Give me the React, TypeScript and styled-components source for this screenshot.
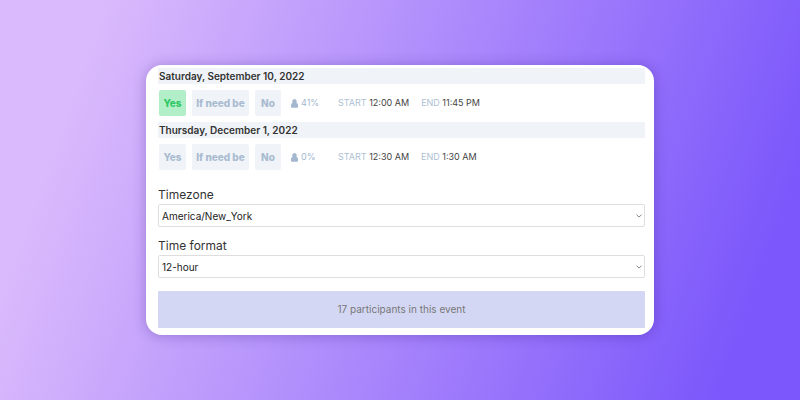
import React from "react";
import styled, { createGlobalStyle } from "styled-components";

const GlobalStyle = createGlobalStyle`
  *, *::before, *::after { box-sizing: border-box; }
  body { margin: 0; font-family: Inter, sans-serif; color: #333; }
`;

const Page = styled.div`
  min-height: 100vh;
  display: flex;
  align-items: center;
  justify-content: center;
  background: linear-gradient(109.6deg, #dabafc 11.2%, #7c57fb 91.1%);
`;

const Card = styled.main`
  width: 100%;
  max-width: 508px;
  padding: 3px 9px 7px 12px;
  border-radius: 16px;
  background: #fff;
  box-shadow: 0 1px 14px rgba(40, 10, 110, 0.28);
`;

const DayHeading = styled.h2`
  margin: 0;
  padding: 0 1px;
  font-size: 10px;
  font-weight: 600;
  line-height: 16px;
  color: #333;
  background: #f0f3f8;
`;

const SlotRow = styled.div`
  display: flex;
  align-items: center;
  padding: 6px 1px;
  font-size: 9px;
  line-height: 16px;
`;

const Votes = styled.div`
  display: grid;
  grid-template-columns: 27px 57px 26px;
  gap: 6px;
`;

const VoteButton = styled.button<{ $active?: boolean }>`
  height: 26px;
  padding: 0;
  border: 0;
  border-radius: 2px;
  font: 800 10px/16px Inter, sans-serif;
  color: ${(p) => (p.$active ? "#2fc765" : "#a9bbd0")};
  background: ${(p) => (p.$active ? "#b2eec8" : "#f0f3f8")};
`;

const Share = styled.div`
  display: flex;
  align-items: center;
  gap: 3px;
  width: 47px;
  margin-left: 10px;
  color: #a3b8cf;
`;

const TimeItem = styled.div`
  margin-right: 12px;
  color: #444;
`;

const TimeLabel = styled.span`
  color: #adbfd3;
`;

const Field = styled.div`
  display: flex;
  flex-direction: column;
  gap: 2px;
  margin-top: 11px;
`;

const FieldLabel = styled.label`
  font-size: 12px;
  line-height: 15px;
`;

const SelectWrap = styled.div`
  display: grid;
  align-items: center;

  & > * {
    grid-area: 1 / 1;
  }
`;

const Select = styled.select`
  appearance: none;
  width: 100%;
  height: 23px;
  padding: 0 12px 0 3px;
  border: 1px solid #dedede;
  border-radius: 2px;
  background: #fff;
  font: 400 10px/16px Inter, sans-serif;
  color: #222;
`;

const Chevron = styled.svg`
  justify-self: end;
  margin-right: 3px;
  pointer-events: none;
`;

const Participants = styled.p`
  margin: 13px 0 0;
  border-radius: 1px;
  background: #d4d7f4;
  color: #777;
  font-size: 10px;
  line-height: 37px;
  text-align: center;
`;

function PersonIcon() {
  return (
    <svg width="7" height="9" viewBox="0 0 14 18" fill="currentColor" aria-hidden="true">
      <ellipse cx="7" cy="5" rx="4.6" ry="5" />
      <path d="M3 8C1 8.800 0 10.300 0 12.500V15.500a2 2 0 0 0 2 2h10a2 2 0 0 0 2-2v-3c0-2.200-1-3.700-3-4.500z" />
    </svg>
  );
}

interface SlotProps {
  day: string;
  share: string;
  start: string;
  end: string;
  chosen?: boolean;
}

function Slot({ day, share, start, end, chosen = false }: SlotProps) {
  return (
    <section>
      <DayHeading>{day}</DayHeading>
      <SlotRow>
        <Votes>
          <VoteButton type="button" $active={chosen} aria-pressed={chosen}>Yes</VoteButton>
          <VoteButton type="button" aria-pressed={false}>If need be</VoteButton>
          <VoteButton type="button" aria-pressed={false}>No</VoteButton>
        </Votes>
        <Share>
          <PersonIcon />
          <span>{share}</span>
        </Share>
        <TimeItem><TimeLabel>START</TimeLabel> {start}</TimeItem>
        <TimeItem><TimeLabel>END</TimeLabel> {end}</TimeItem>
      </SlotRow>
    </section>
  );
}

interface SelectFieldProps {
  id: string;
  label: string;
  options: string[];
}

function SelectField({ id, label, options }: SelectFieldProps) {
  return (
    <Field>
      <FieldLabel htmlFor={id}>{label}</FieldLabel>
      <SelectWrap>
        <Select id={id}>
          {options.map((option) => <option key={option}>{option}</option>)}
        </Select>
        <Chevron width="6" height="4" viewBox="0 0 12 8" fill="none" stroke="#888" strokeWidth="2" aria-hidden="true">
          <path d="M1 1.500l5 4.500 5-4.500" />
        </Chevron>
      </SelectWrap>
    </Field>
  );
}

export default function App() {
  return (
    <>
      <GlobalStyle />
      <Page>
        <Card>
          <Slot day="Saturday, September 10, 2022" share="41%" start="12:00 AM" end="11:45 PM" chosen />
          <Slot day="Thursday, December 1, 2022" share="0%" start="12:30 AM" end="1:30 AM" />
          <SelectField id="timezone" label="Timezone" options={["America/New_York"]} />
          <SelectField id="time-format" label="Time format" options={["12-hour"]} />
          <Participants>17 participants in this event</Participants>
        </Card>
      </Page>
    </>
  );
}
